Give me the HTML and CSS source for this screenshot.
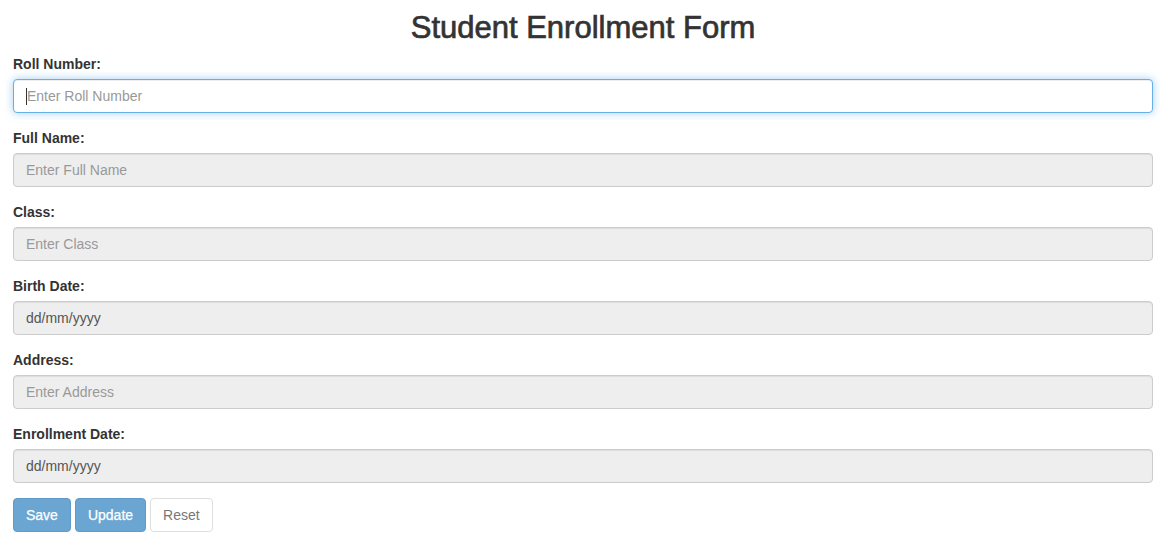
FILE: index.html
```html
<!DOCTYPE html>
<html lang="en">
<head>
<meta charset="utf-8">
<title>Student Enrollment Form</title>
<link rel="stylesheet" href="styles.css">
</head>
<body>
<div class="container">
  <h2 class="title">Student Enrollment Form</h2>
  <form class="form">
    <div class="form-group">
      <label class="label">Roll Number:</label>
      <div class="input focused"><span class="caret"></span><span class="placeholder">Enter Roll Number</span></div>
    </div>
    <div class="form-group">
      <label class="label">Full Name:</label>
      <div class="input disabled"><span class="placeholder">Enter Full Name</span></div>
    </div>
    <div class="form-group">
      <label class="label">Class:</label>
      <div class="input disabled"><span class="placeholder">Enter Class</span></div>
    </div>
    <div class="form-group">
      <label class="label">Birth Date:</label>
      <div class="input disabled"><span class="value">dd/mm/yyyy</span></div>
    </div>
    <div class="form-group">
      <label class="label">Address:</label>
      <div class="input disabled"><span class="placeholder">Enter Address</span></div>
    </div>
    <div class="form-group">
      <label class="label">Enrollment Date:</label>
      <div class="input disabled"><span class="value">dd/mm/yyyy</span></div>
    </div>
    <div class="actions">
      <button type="button" class="btn btn-primary">Save</button>
      <button type="button" class="btn btn-primary">Update</button>
      <button type="button" class="btn btn-default">Reset</button>
    </div>
  </form>
</div>
</body>
</html>
```
FILE: styles.css
```css
html, body {
  margin: 0;
  padding: 0;
  background: #fff;
}
body {
  font-family: "Liberation Sans", Arial, Helvetica, sans-serif;
  font-size: 14px;
  line-height: 20px;
  color: #333;
}
.container {
  padding: 11px 21px 0 13px;
}
.title {
  margin: 0 0 10px 0;
  font-size: 31px;
  line-height: 33px;
  font-weight: normal;
  text-align: center;
  color: #333;
  -webkit-text-stroke: 0.7px #333;
}
.form {
  margin: 0;
}
.form-group {
  margin-bottom: 15px;
}
.label {
  display: block;
  margin-bottom: 5px;
  font-weight: bold;
  font-size: 14px;
  line-height: 20px;
  color: #333;
}
.input {
  box-sizing: border-box;
  height: 34px;
  padding: 6px 12px;
  border: 1px solid #ccc;
  border-radius: 4px;
  background: #fff;
  box-shadow: inset 0 1px 1px rgba(0, 0, 0, 0.075);
  font-size: 14px;
  line-height: 20px;
  display: flex;
  align-items: center;
  white-space: nowrap;
}
.input.focused {
  border-color: #66afe9;
  box-shadow: inset 0 1px 1px rgba(0, 0, 0, 0.075), 0 0 8px rgba(102, 175, 233, 0.6);
}
.input.disabled {
  background: #eee;
}
.placeholder {
  color: #999;
}
.value {
  color: #555;
}
.caret {
  display: inline-block;
  width: 1px;
  height: 17px;
  background: #333;
}
.actions {
  display: flex;
  gap: 4px;
}
.btn {
  box-sizing: border-box;
  height: 34px;
  padding: 6px 12px;
  border: 1px solid transparent;
  border-radius: 4px;
  font-family: "Liberation Sans", Arial, Helvetica, sans-serif;
  font-size: 14px;
  line-height: 20px;
  cursor: not-allowed;
}
.btn-primary {
  background: #6ba6d3;
  border-color: #5f9acb;
  color: #fff;
  -webkit-text-stroke: 0.25px #fff;
}
.btn-default {
  background: #fff;
  border-color: #dedede;
  color: #777;
}
```
